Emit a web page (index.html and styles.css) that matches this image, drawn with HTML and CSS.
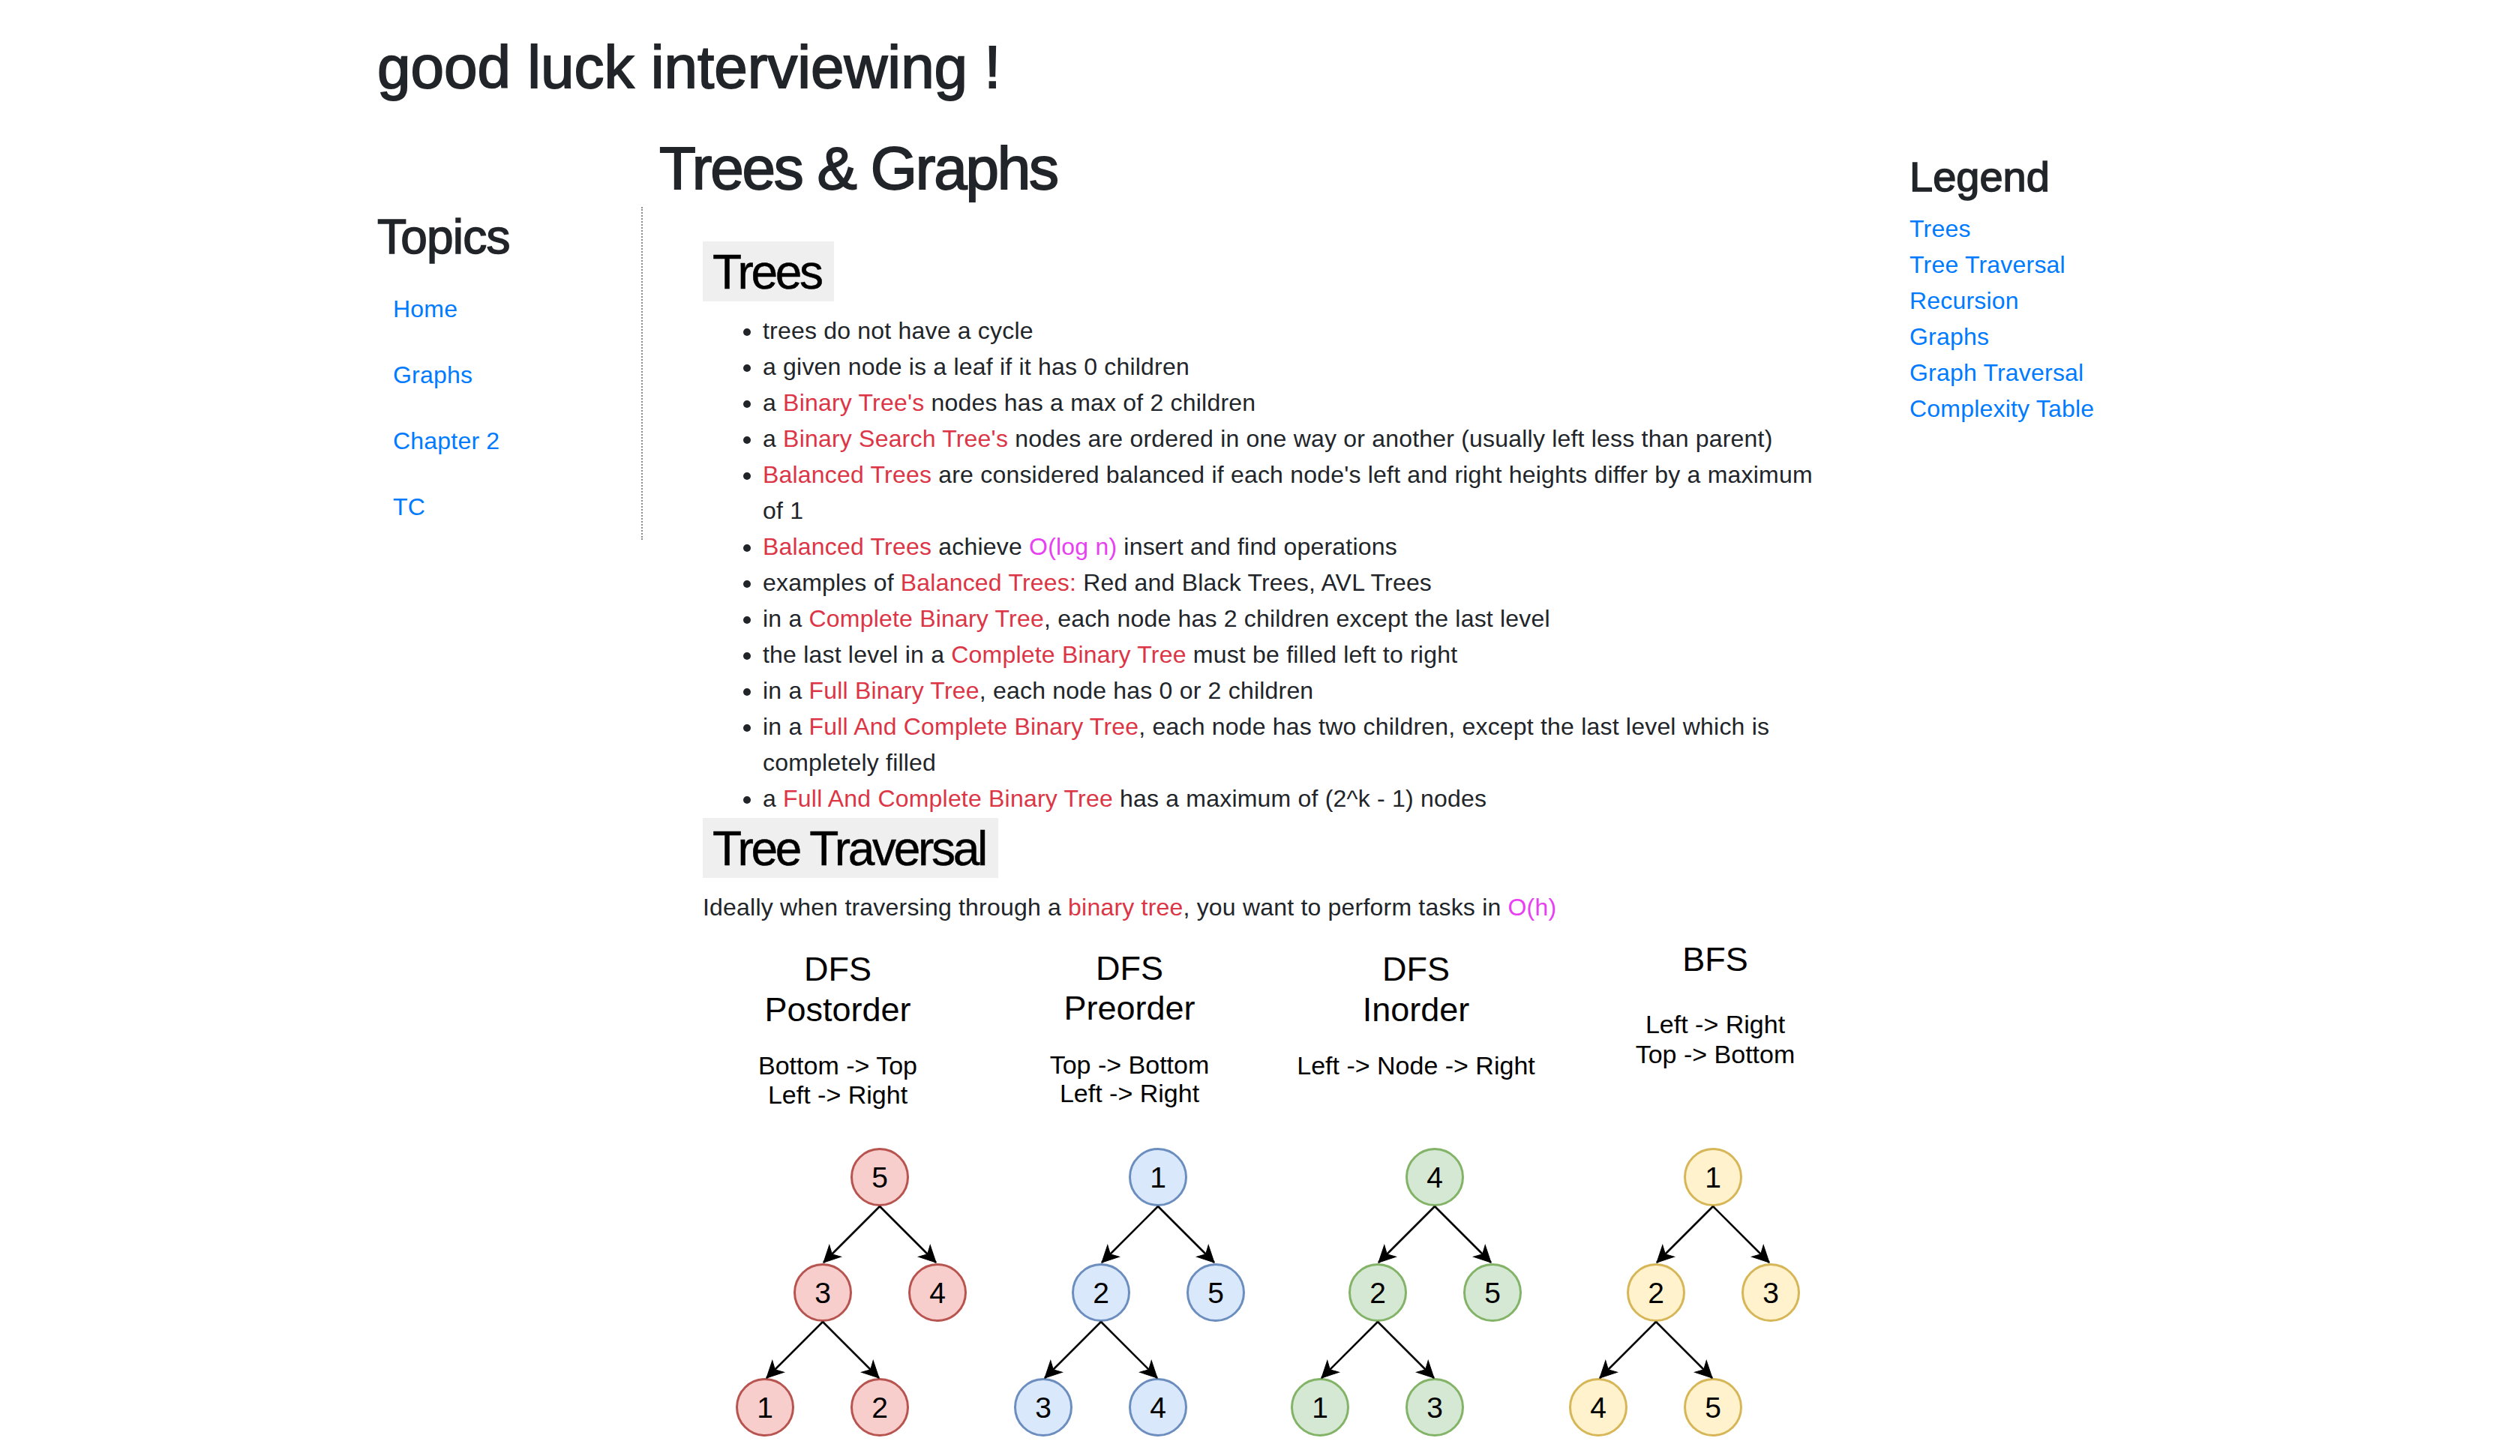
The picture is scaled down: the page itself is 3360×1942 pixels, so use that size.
FILE: index.html
```html
<!DOCTYPE html>
<html lang="en">
<head>
<meta charset="utf-8">
<title>good luck interviewing !</title>
<link rel="stylesheet" href="styles.css">
</head>
<body>
<div class="page">
  <h1 class="site-title">good luck interviewing !</h1>
  <div class="layout">
    <nav class="sidebar">
      <h2 class="sidebar-title">Topics</h2>
      <ul class="nav">
        <li><a class="nav-link" href="#">Home</a></li>
        <li><a class="nav-link" href="#">Graphs</a></li>
        <li><a class="nav-link" href="#">Chapter 2</a></li>
        <li><a class="nav-link" href="#">TC</a></li>
      </ul>
    </nav>
    <main class="main">
      <h1 class="page-title">Trees &amp; Graphs</h1>
      <section class="topic" id="trees">
        <h2 class="topic-title">Trees</h2>
        <ul class="facts">
          <li>trees do not have a cycle</li>
          <li>a given node is a leaf if it has 0 children</li>
          <li>a <span class="term">Binary Tree's</span> nodes has a max of 2 children</li>
          <li>a <span class="term">Binary Search Tree's</span> nodes are ordered in one way or another (usually left less than parent)</li>
          <li><span class="term">Balanced Trees</span> are considered balanced if each node's left and right heights differ by a maximum of 1</li>
          <li><span class="term">Balanced Trees</span> achieve <span class="big-o">O(log n)</span> insert and find operations</li>
          <li>examples of <span class="term">Balanced Trees:</span> Red and Black Trees, AVL Trees</li>
          <li>in a <span class="term">Complete Binary Tree</span>, each node has 2 children except the last level</li>
          <li>the last level in a <span class="term">Complete Binary Tree</span> must be filled left to right</li>
          <li>in a <span class="term">Full Binary Tree</span>, each node has 0 or 2 children</li>
          <li>in a <span class="term">Full And Complete Binary Tree</span>, each node has two children, except the last level which is completely filled</li>
          <li>a <span class="term">Full And Complete Binary Tree</span> has a maximum of (2^k - 1) nodes</li>
        </ul>
      </section>
      <section class="topic" id="tree-traversal">
        <h2 class="topic-title">Tree Traversal</h2>
        <p class="lead-text">Ideally when traversing through a <span class="term">binary tree</span>, you want to perform tasks in <span class="big-o">O(h)</span></p>
        <svg class="traversals" width="1513" height="720" viewBox="937 1234 1513 720" role="img" aria-label="Tree traversal orders">
          <defs>
            <marker id="arrow" viewBox="-26 -13 28 26" refX="0" refY="0" markerWidth="28" markerHeight="26" markerUnits="userSpaceOnUse" orient="auto">
              <path class="arrow-head" d="M0,0 L-22,-11 L-16,0 L-22,11 Z"/>
            </marker>
          </defs>

          <text class="dg-title" x="1117" y="1308">DFS</text>
          <text class="dg-title" x="1117" y="1362">Postorder</text>
          <text class="dg-sub" x="1117" y="1433">Bottom -&gt; Top</text>
          <text class="dg-sub" x="1117" y="1472">Left -&gt; Right</text>

          <text class="dg-title" x="1506" y="1307">DFS</text>
          <text class="dg-title" x="1506" y="1360">Preorder</text>
          <text class="dg-sub" x="1506" y="1432">Top -&gt; Bottom</text>
          <text class="dg-sub" x="1506" y="1470">Left -&gt; Right</text>

          <text class="dg-title" x="1888" y="1308">DFS</text>
          <text class="dg-title" x="1888" y="1362">Inorder</text>
          <text class="dg-sub" x="1888" y="1433">Left -&gt; Node -&gt; Right</text>

          <text class="dg-title" x="2287" y="1295">BFS</text>
          <text class="dg-sub" x="2287" y="1378">Left -&gt; Right</text>
          <text class="dg-sub" x="2287" y="1418">Top -&gt; Bottom</text>

          <g class="tree red">
            <circle cx="1173" cy="1570" r="37.5"/><text x="1173" y="1584">5</text>
            <circle cx="1097" cy="1724" r="37.5"/><text x="1097" y="1738">3</text>
            <circle cx="1250" cy="1724" r="37.5"/><text x="1250" y="1738">4</text>
            <circle cx="1020" cy="1877" r="37.5"/><text x="1020" y="1891">1</text>
            <circle cx="1173" cy="1877" r="37.5"/><text x="1173" y="1891">2</text>
          </g>
          <g class="tree blue">
            <circle cx="1544" cy="1570" r="37.5"/><text x="1544" y="1584">1</text>
            <circle cx="1468" cy="1724" r="37.5"/><text x="1468" y="1738">2</text>
            <circle cx="1621" cy="1724" r="37.5"/><text x="1621" y="1738">5</text>
            <circle cx="1391" cy="1877" r="37.5"/><text x="1391" y="1891">3</text>
            <circle cx="1544" cy="1877" r="37.5"/><text x="1544" y="1891">4</text>
          </g>
          <g class="tree green">
            <circle cx="1913" cy="1570" r="37.5"/><text x="1913" y="1584">4</text>
            <circle cx="1837" cy="1724" r="37.5"/><text x="1837" y="1738">2</text>
            <circle cx="1990" cy="1724" r="37.5"/><text x="1990" y="1738">5</text>
            <circle cx="1760" cy="1877" r="37.5"/><text x="1760" y="1891">1</text>
            <circle cx="1913" cy="1877" r="37.5"/><text x="1913" y="1891">3</text>
          </g>
          <g class="tree yellow">
            <circle cx="2284" cy="1570" r="37.5"/><text x="2284" y="1584">1</text>
            <circle cx="2208" cy="1724" r="37.5"/><text x="2208" y="1738">2</text>
            <circle cx="2361" cy="1724" r="37.5"/><text x="2361" y="1738">3</text>
            <circle cx="2131" cy="1877" r="37.5"/><text x="2131" y="1891">4</text>
            <circle cx="2284" cy="1877" r="37.5"/><text x="2284" y="1891">5</text>
          </g>

          <g class="edges">
            <line x1="1173" y1="1609" x2="1098" y2="1684"/>
            <line x1="1173" y1="1609" x2="1248" y2="1684"/>
            <line x1="1097" y1="1763" x2="1022" y2="1838"/>
            <line x1="1097" y1="1763" x2="1172" y2="1838"/>

            <line x1="1544" y1="1609" x2="1469" y2="1684"/>
            <line x1="1544" y1="1609" x2="1619" y2="1684"/>
            <line x1="1468" y1="1763" x2="1393" y2="1838"/>
            <line x1="1468" y1="1763" x2="1543" y2="1838"/>

            <line x1="1913" y1="1609" x2="1838" y2="1684"/>
            <line x1="1913" y1="1609" x2="1988" y2="1684"/>
            <line x1="1837" y1="1763" x2="1762" y2="1838"/>
            <line x1="1837" y1="1763" x2="1912" y2="1838"/>

            <line x1="2284" y1="1609" x2="2209" y2="1684"/>
            <line x1="2284" y1="1609" x2="2359" y2="1684"/>
            <line x1="2208" y1="1763" x2="2133" y2="1838"/>
            <line x1="2208" y1="1763" x2="2283" y2="1838"/>
          </g>
        </svg>
      </section>
    </main>
    <aside class="legend">
      <h3 class="legend-title">Legend</h3>
      <a class="legend-link" href="#trees">Trees</a>
      <a class="legend-link" href="#tree-traversal">Tree Traversal</a>
      <a class="legend-link" href="#">Recursion</a>
      <a class="legend-link" href="#">Graphs</a>
      <a class="legend-link" href="#">Graph Traversal</a>
      <a class="legend-link" href="#">Complexity Table</a>
    </aside>
  </div>
</div>
</body>
</html>
```

FILE: styles.css
```css
* {
  box-sizing: border-box;
}

body {
  margin: 0;
  background: #fff;
  color: #212529;
  font-family: "Liberation Sans", Arial, Helvetica, sans-serif;
  font-size: 32px;
  line-height: 1.5;
  letter-spacing: 0.2px;
}

a {
  color: #007bff;
  text-decoration: none;
}

.page {
  padding: 42px 0 0 503px;
}

.site-title,
.page-title,
.sidebar-title,
.legend-title {
  font-weight: 500;
  line-height: 1.2;
  letter-spacing: 0;
  color: #212529;
}

.site-title {
  margin: 0;
  font-size: 80px;
  -webkit-text-stroke: 1.8px #212529;
}

.layout {
  display: flex;
  align-items: flex-start;
}

/* left navigation */
.sidebar {
  width: 354px;
  margin-top: 138px;
  padding-top: 2px;
  border-right: 2px dotted #8c8c8c;
}

.sidebar-title {
  margin: 0 0 13px;
  font-size: 64px;
  letter-spacing: -0.8px;
  -webkit-text-stroke: 1.5px #212529;
}

.nav {
  list-style: none;
  margin: 0;
  padding: 0;
}

.nav-link {
  display: block;
  padding: 20px 21px;
}

/* main column */
.main {
  width: 1593px;
  padding-left: 22px;
}

.page-title {
  margin: 39px 0 49px;
  font-size: 80px;
  letter-spacing: -2.2px;
  -webkit-text-stroke: 1.8px #212529;
}

.topic {
  margin-left: 58px;
}

.topic-title {
  display: block;
  width: fit-content;
  margin: 0 0 15px;
  padding: 3px 17px 0 13px;
  background: #efefef;
  color: #000;
  font-size: 64px;
  font-weight: 400;
  line-height: 1.2;
  letter-spacing: -3.3px;
  -webkit-text-stroke: 0.5px #000;
}

.facts {
  margin: 0 0 2px;
  padding-left: 80px;
}

.lead-text {
  margin: 0;
}

.term {
  color: #dc3545;
}

.big-o {
  color: #e83ff2;
}

/* traversal diagrams */
.traversals {
  display: block;
  overflow: visible;
  font-family: "Liberation Sans", Arial, Helvetica, sans-serif;
  letter-spacing: 0;
}

.traversals text {
  text-anchor: middle;
  fill: #000;
}

.dg-title {
  font-size: 45px;
}

.dg-sub {
  font-size: 34px;
}

.tree text {
  font-size: 39px;
}

.tree circle {
  stroke-width: 3;
}

.red circle {
  fill: #f8cecc;
  stroke: #b85450;
}

.blue circle {
  fill: #dae8fc;
  stroke: #6c8ebf;
}

.green circle {
  fill: #d5e8d4;
  stroke: #82b366;
}

.yellow circle {
  fill: #fff2cc;
  stroke: #d6b656;
}

.edges line {
  stroke: #000;
  stroke-width: 2.6;
  marker-end: url(#arrow);
}

.arrow-head {
  fill: #000;
  stroke: #000;
  stroke-width: 1;
  stroke-linejoin: miter;
}

/* right legend */
.legend {
  margin-left: 96px;
  margin-top: 64px;
}

.legend-title {
  margin: 0 0 12px;
  font-size: 56px;
  -webkit-text-stroke: 1.5px #212529;
}

.legend-link {
  display: block;
}
```
